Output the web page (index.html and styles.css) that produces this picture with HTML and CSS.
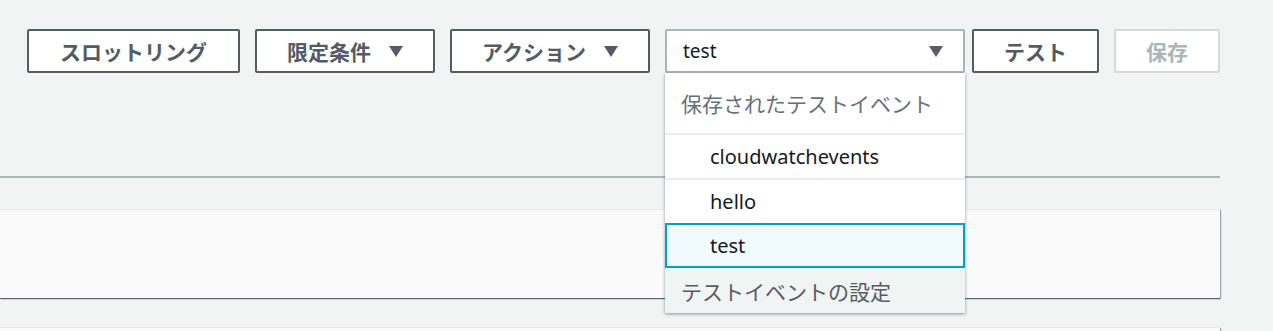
FILE: index.html
```html
<!DOCTYPE html>
<html lang="ja">
<head>
    <meta charset="UTF-8">
    <meta name="viewport" content="width=device-width, initial-scale=1.0">
    <title>テスト</title>
    <link rel="stylesheet" href="styles.css">
</head>
<body>
    <div class="page">
        <div class="toolbar">
            <button class="btn throttle-btn">スロットリング</button>
            <button class="btn">限定条件<span class="caret"></span></button>
            <button class="btn">アクション<span class="caret"></span></button>

            <div class="select-wrap">
                <div class="select">
                    <span>test</span>
                    <span class="caret"></span>
                </div>
                <div class="menu">
                    <div class="menu-header">保存されたテストイベント</div>
                    <div class="menu-item">cloudwatchevents</div>
                    <div class="menu-item">hello</div>
                    <div class="menu-item selected">test</div>
                    <div class="menu-footer">テストイベントの設定</div>
                </div>
            </div>

            <button class="btn test-btn">テスト</button>
            <button class="btn" disabled>保存</button>
        </div>

        <div class="rule"></div>
        <div class="card"></div>
        <div class="card"></div>
    </div>
</body>
</html>
```

FILE: styles.css
```css
body {
    margin: 0;
    background: #f2f3f3;
    font-family: "Noto Sans", "Noto Sans CJK JP", sans-serif;
    color: #16191f;
}
.page {
    padding: 29px 53px 0 0;
}
.toolbar {
    display: flex;
    justify-content: flex-end;
    align-items: flex-start;
    gap: 15px;
}
.btn {
    display: flex;
    align-items: center;
    height: 44px;
    padding: 0 30px;
    background: #fff;
    border: 2px solid #545b64;
    border-radius: 2px;
    color: #545b64;
    font-family: inherit;
    font-size: 21px;
    font-weight: 700;
    cursor: pointer;
}
.btn[disabled] {
    border-color: #d5dbdb;
    color: #aab7b8;
    cursor: default;
}
.throttle-btn {
    padding: 0 31px;
}
.caret {
    display: inline-block;
    width: 0;
    height: 0;
    margin-left: 18px;
    border-left: 7.5px solid transparent;
    border-right: 7.5px solid transparent;
    border-top: 11px solid #545b64;
}
.select-wrap {
    position: relative;
    width: 300px;
}
.select {
    display: flex;
    align-items: center;
    justify-content: space-between;
    box-sizing: border-box;
    height: 44px;
    padding: 0 20px 0 16px;
    background: #fff;
    border: 2px solid #aab7b8;
    border-radius: 2px;
    font-size: 19px;
}
.test-btn {
    margin-left: -8px;
}
.menu {
    position: absolute;
    top: 44px;
    left: 0;
    width: 300px;
    background: #fff;
    box-shadow: 0 1px 3px rgba(0, 28, 36, 0.45);
    z-index: 10;
}
.menu-header {
    height: 60px;
    padding-left: 16px;
    display: flex;
    align-items: center;
    border-bottom: 2px solid #eaeded;
    color: #687078;
    font-size: 21px;
}
.menu-item {
    box-sizing: border-box;
    height: 45px;
    padding-left: 45px;
    display: flex;
    align-items: center;
    border-bottom: 2px solid #eaeded;
    font-size: 20px;
}
.menu-item.selected {
    margin-top: -2px;
    border: 2px solid #00a1c9;
    padding-left: 43px;
    background: #f1faff;
}
.menu-footer {
    height: 45px;
    padding-left: 16px;
    display: flex;
    align-items: center;
    background: #f2f3f3;
    color: #545b64;
    font-size: 21px;
}
.rule {
    height: 2px;
    margin-top: 103px;
    background: #aab7b8;
}
.card {
    height: 88px;
    margin-top: 31px;
    background: #fafafa;
    border-top: 1px solid #eaeded;
    box-shadow: 0 1px 1px 0 rgba(0, 28, 36, 0.5), 1px 1px 1px 0 rgba(0, 28, 36, 0.3);
}
.card + .card {
    margin-top: 29px;
}
```
